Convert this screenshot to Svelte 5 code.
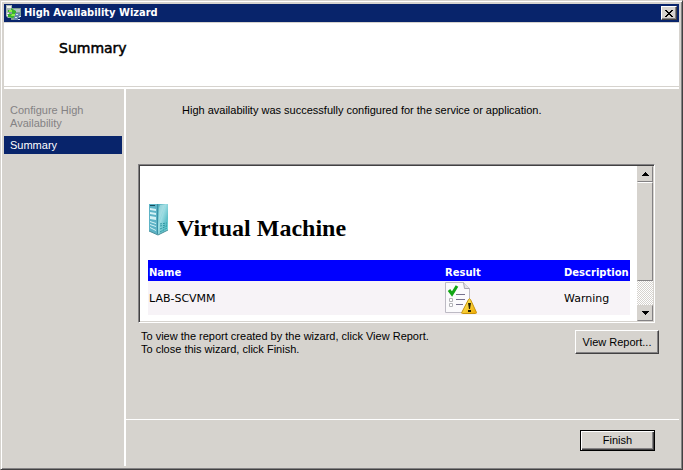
<script>
  const columns = ['Name', 'Result', 'Description'];
  const rows = [{ name: 'LAB-SCVMM', description: 'Warning' }];
</script>

<div class="window">
  <header class="titlebar">
    <svg class="app-icon" width="16" height="16" viewBox="0 0 16 16" aria-hidden="true">
      <path d="M0 0h6v13H2L0 11z" fill="#a9b7b5" />
      <path d="M1 1h4v2H1zM1 8h3v1H1zM1 10h4v1H1z" fill="#f1f4ee" />
      <path d="M6 3h9v8h-4v4H5v-3H3V7h3z" fill="#7f9d91" />
      <path d="M7 4h7v3H7z" fill="#b2c4c5" />
      <path d="M2 5h3V3l5 3v4l-3 3-5-1V9h4V7H2z" fill="#37b52b" />
      <path d="M3 5h3v2H3zM6 9h3v2H5z" fill="#8dec49" />
      <path d="M9 8h5v5h-2v2H8v-4h1z" fill="#6687ab" />
      <path d="M10 9h2v1h-2zM9 12h2v1H9zM13 11h2v1h-2zM12 14h2v1h-2z" fill="#d5e2f0" />
    </svg>
    <span class="caption">High Availability Wizard</span>
    <button class="close" aria-label="Close">
      <svg width="8" height="7" viewBox="0 0 8 7" shape-rendering="crispEdges" aria-hidden="true">
        <path d="M0 0h2v1h1v1h2V1h1V0h2v1H7v1H6v1H5v1h1v1h1v1h1v1H6V6H5V5H3v1H2v1H0V6h1V5h1V4h1V3H2V2H1V1H0z" fill="#000" />
      </svg>
    </button>
  </header>

  <section class="banner"><h1>Summary</h1></section>

  <div class="body">
    <nav class="steps">
      <a href="#configure" class="done">Configure High Availability</a>
      <a href="#summary" class="current" aria-current="step">Summary</a>
    </nav>

    <main>
      <div class="content">
        <p class="message">High availability was successfully configured for the service or application.</p>

        <div class="report">
          <div class="document">
            <div class="heading">
              <svg width="20" height="32" viewBox="0 0 20 32" aria-hidden="true">
                <defs>
                  <linearGradient id="side" x1="0" y1="0" x2="1" y2="1">
                    <stop offset="0" stop-color="#45a9b8" />
                    <stop offset="0.4" stop-color="#9edde3" />
                    <stop offset="0.7" stop-color="#5fbfc8" />
                    <stop offset="1" stop-color="#7fe6e4" />
                  </linearGradient>
                </defs>
                <path d="M1 0h9v31L1 27z" fill="#5db3c6" />
                <path d="M10 0h10v26l-10 5z" fill="url(#side)" />
                <path d="M12 1h5l-6 16V4z" fill="#b4e4e8" opacity=".6" />
                <path d="M2 1h5v1H2z" fill="#174d5c" />
                <path d="M2 4l6 1v2L2 6zM2 8l6 1v2l-6-1zM2 12l6 1v3l-6-1zM2 17l6 2v1l-6-2zM2 20l6 2v1l-6-2zM2 23l6 3v1l-6-3z" fill="#d5f2f6" />
                <path d="M12 20l7-1M12 22l7-1M12 25l7-3M12 28l7-4" stroke="#2f98a2" stroke-dasharray="2 1" />
                <path d="M9 0h1v30H9z" fill="#3a8fa4" />
                <path d="M1 27l9 4 10-5" fill="none" stroke="#4a8f9a" />
              </svg>
              <h2>Virtual Machine</h2>
            </div>
            <table>
              <thead>
                <tr>
                  {#each columns as column}
                    <th>{column}</th>
                  {/each}
                </tr>
              </thead>
              <tbody>
                {#each rows as row}
                  <tr>
                    <td>{row.name}</td>
                    <td>
                      <svg width="32" height="32" viewBox="0 0 32 32" role="img" aria-label="Completed with warnings">
                        <defs>
                          <linearGradient id="warn" x1="0" y1="0" x2="1" y2="1">
                            <stop offset="0" stop-color="#fff36b" />
                            <stop offset="1" stop-color="#efa800" />
                          </linearGradient>
                        </defs>
                        <path d="M.5.5h18l6 6v24H.5z" fill="#fbfafc" stroke="#bdbac4" />
                        <path d="M18.500.5l1 6h5" fill="#e4e2e8" stroke="#aaa7b2" />
                        <path d="M4 8l3 4 5-8" fill="none" stroke="#12a515" stroke-width="3" />
                        <path d="M4.500 16.500h3v3h-3zM4.500 21.500h3v3h-3z" fill="#fff" stroke="#b4b4b8" />
                        <path d="M11 12.500h9M11 17.500h9M11 22.500h7" stroke="#77728d" />
                        <path d="M23.500 17.500Q24.500 16 25.500 17.500L31.500 30.500Q31.500 31.500 30.500 31.500H17.500Q16 31.500 17 30z" fill="url(#warn)" stroke="#c8930b" />
                        <path d="M23 21h3l-1 6h-1z" fill="#241e00" />
                        <path d="M23 28h3v2h-3z" fill="#241e00" />
                      </svg>
                    </td>
                    <td>{row.description}</td>
                  </tr>
                {/each}
              </tbody>
            </table>
          </div>
          <div class="scrollbar">
            <button aria-label="Scroll up">
              <svg width="7" height="4" viewBox="0 0 7 4" shape-rendering="crispEdges"><path d="M3 0h1v1h1v1h1v1h1v1H0V3h1V2h1V1h1z" /></svg>
            </button>
            <div class="thumb"></div>
            <div class="track"></div>
            <button class="down" aria-label="Scroll down">
              <svg width="7" height="4" viewBox="0 0 7 4" shape-rendering="crispEdges"><path d="M0 0h7v1H6v1H5v1H4v1H3V3H2V2H1V1H0z" /></svg>
            </button>
          </div>
        </div>

        <div class="hint">
          <p>To view the report created by the wizard, click View Report.<br />To close this wizard, click Finish.</p>
          <button class="push view">View Report...</button>
        </div>
      </div>

      <footer>
        <button class="push finish">Finish</button>
      </footer>
    </main>
  </div>
</div>

<style>
  :global(body) {
    margin: 0;
    background: #d6d3ce;
  }

  .window {
    box-sizing: border-box;
    min-height: 100vh;
    display: flex;
    flex-direction: column;
    padding: 3px;
    background: #d6d3ce;
    border: 1px solid;
    border-color: #d6d3ce #424142 #424142 #d6d3ce;
    box-shadow: inset 1px 1px #fff, inset -1px -1px #848284;
    color: #000;
    font: 11px/13px "Liberation Sans", Arial, sans-serif;
  }

  h1, h2, p {
    margin: 0;
  }

  button {
    box-sizing: border-box;
    padding: 0;
    background: #d6d3ce;
    color: #000;
    font: inherit;
    border: 1px solid;
    border-color: #fff #424142 #424142 #fff;
    border-radius: 0;
    box-shadow: inset -1px -1px #848284;
  }

  .titlebar {
    display: flex;
    align-items: center;
    height: 18px;
    padding: 0 2px;
    background: #08246b;
    color: #fff;
  }

  .caption {
    flex: 1;
    padding-left: 2px;
    font: bold 11px/16px "DejaVu Sans Condensed", Tahoma, sans-serif;
  }

  .close {
    display: flex;
    align-items: center;
    justify-content: center;
    width: 16px;
    height: 14px;
  }

  .banner {
    height: 63px;
    border-top: 1px solid #d6d3ce;
    border-bottom: 1px solid #d6d3ce;
    background: #fff;
    box-shadow: 0 2px #fff;
    margin-bottom: 2px;
  }

  h1 {
    padding: 16px 0 0 55px;
    font: 14px/18px "DejaVu Sans", Verdana, sans-serif;
    -webkit-text-stroke: 0.5px #000;
  }

  .body {
    flex: 1;
    display: flex;
  }

  .steps {
    display: flex;
    flex-direction: column;
    gap: 6px;
    width: 118px;
    padding: 15px 2px 0 0;
    border-right: 2px solid #fff;
  }

  .steps a {
    padding: 0 6px;
    color: #848284;
    text-decoration: none;
  }

  .steps .current {
    padding: 3px 6px 2px;
    background: #08246b;
    color: #fff;
  }

  main {
    flex: 1;
    display: flex;
    flex-direction: column;
    min-width: 0;
  }

  .content {
    flex: 1;
    padding: 15px 20px 0 12px;
  }

  .message {
    padding-left: 44px;
  }

  .report {
    display: flex;
    height: 155px;
    margin: 47px 4px 0 0;
    background: #fff;
    border: 1px solid;
    border-color: #848284 #fff #fff #848284;
    box-shadow: inset 1px 1px #424142, inset -1px -1px #d6d3ce;
    padding: 1px;
  }

  .document {
    flex: 1;
    padding: 38px 7px 0 8px;
    overflow: hidden;
  }

  .heading {
    display: flex;
    gap: 9px;
    height: 56px;
  }

  h2 {
    padding-top: 10px;
    font: bold 24px/28px "Liberation Serif", "Times New Roman", serif;
  }

  table {
    width: 100%;
    border-collapse: collapse;
    table-layout: fixed;
    font: 11px/13px "DejaVu Sans", Verdana, sans-serif;
  }

  th {
    height: 21px;
    padding: 3px 1px 0;
    box-sizing: border-box;
    background: #00f;
    color: #fff;
    text-align: left;
    font-size: 10px;
    font-weight: bold;
  }

  th:nth-child(2) {
    width: 119px;
  }

  th:nth-child(3) {
    width: 67px;
  }

  td {
    height: 32px;
    padding: 1px;
    background: #f7f3f7;
  }

  td svg {
    display: block;
  }

  .scrollbar {
    display: flex;
    flex-direction: column;
    width: 16px;
    background: repeating-conic-gradient(#d6d3ce 0 25%, #fff 0 50%) 0 0 / 2px 2px;
  }

  .scrollbar button {
    display: flex;
    align-items: center;
    justify-content: center;
    height: 16px;
    border-color: #d6d3ce #848284 #848284 #d6d3ce;
    box-shadow: none;
  }

  .thumb {
    flex: 0 0 99px;
    box-sizing: border-box;
    background: #d6d3ce;
    border: 1px solid;
    border-color: #fff #848284 #848284 #d6d3ce;
  }

  .track {
    flex: 1;
  }

  .hint {
    display: flex;
    justify-content: space-between;
    padding: 7px 0 0 3px;
  }

  .push {
    height: 24px;
    white-space: nowrap;
  }

  .view {
    width: 84px;
  }

  footer {
    display: flex;
    justify-content: flex-end;
    padding: 10px 24px 15px 0;
    border-top: 1px solid #fff;
  }

  .finish {
    width: 75px;
    height: 21px;
    border-color: #000;
    box-shadow: inset 1px 1px #fff, inset -1px -1px #424142, inset -2px -2px #848284;
  }
</style>
